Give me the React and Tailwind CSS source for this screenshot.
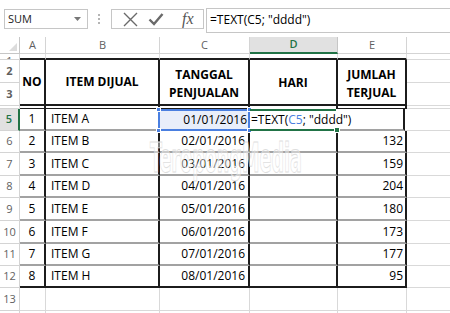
import React from 'react';

// rows 6..12 of the sheet
const rows = [
  { n: 6, no: 2, name: 'ITEM B', date: '02/01/2016', qty: '132', h: 'h-[22px]' },
  { n: 7, no: 3, name: 'ITEM C', date: '03/01/2016', qty: '159', h: 'h-[23px]' },
  { n: 8, no: 4, name: 'ITEM D', date: '04/01/2016', qty: '204', h: 'h-[22px]' },
  { n: 9, no: 5, name: 'ITEM E', date: '05/01/2016', qty: '180', h: 'h-[23px]' },
  { n: 10, no: 6, name: 'ITEM F', date: '06/01/2016', qty: '173', h: 'h-[23px]' },
  { n: 11, no: 7, name: 'ITEM G', date: '07/01/2016', qty: '177', h: 'h-[22px]' },
  { n: 12, no: 8, name: 'ITEM H', date: '08/01/2016', qty: '95', h: 'h-[22px]' },
];

const rowHead = 'w-[20px] shrink-0 flex items-center justify-center border-r border-b border-[#d4d4d4] text-[11px] text-[#5f5f5f]';
const sep = 'border-b-2 border-b-[#a2a2a2]';
const solid = 'border-b-2 border-b-[#1c1c1c]';

const FormulaBar = () => (
  <div className="h-[37px] flex items-start pt-[8px] pl-[4px]">
    <div className="w-[84px] h-[20px] mt-[1px] border border-[#c6c6c6] flex items-center justify-between pl-[3px] pr-[6px] text-[11px] text-[#222]">
      <span>SUM</span>
      <svg width="7" height="4" viewBox="0 0 7 4"><path d="M0 0h7L3.5 4z" fill="#777" /></svg>
    </div>
    <div className="ml-[10px] mt-[6px] flex flex-col gap-[2px]">
      <div className="w-[2px] h-[2px] bg-[#b5b5b5]" />
      <div className="w-[2px] h-[2px] bg-[#b5b5b5]" />
      <div className="w-[2px] h-[2px] bg-[#b5b5b5]" />
    </div>
    <div className="ml-[11px] w-[93px] h-[20px] mt-[1px] border border-[#c6c6c6] flex items-center pl-[11px] gap-[10px]">
      <svg width="15" height="15" viewBox="0 0 15 15">
        <path d="M1 1L14 14M14 1L1 14" stroke="#6a6a6a" strokeWidth="1.4" fill="none" />
      </svg>
      <svg width="16" height="14" viewBox="0 0 16 14">
        <path d="M1.5 7.5L6 12L14.5 2" stroke="#6a6a6a" strokeWidth="2.4" fill="none" />
      </svg>
      <span className="ml-[8px] font-['Liberation_Serif',serif] italic text-[16px] leading-none text-[#555]">fx</span>
    </div>
    <div className="ml-[2px] flex-1 h-[25px] border border-r-0 border-[#c6c6c6] pl-[3px] pt-[2px] text-[12px] text-black whitespace-nowrap">
      =TEXT(C5; "dddd")
    </div>
  </div>
);

const ColumnHeaders = () => (
  <div className="flex h-[17px] text-[11px] text-[#5f5f5f]">
    <div className="w-[20px] shrink-0 border-r border-b border-[#c6c6c6] flex items-end justify-end pr-[2px] pb-[2px]">
      <svg width="8" height="8" viewBox="0 0 8 8"><path d="M8 0V8H0z" fill="#dcdcdc" /></svg>
    </div>
    <div className="w-[26px] shrink-0 border-r border-b border-[#d4d4d4] flex items-center justify-center">A</div>
    <div className="w-[114px] shrink-0 border-r border-b border-[#d4d4d4] flex items-center justify-center">B</div>
    <div className="w-[90px] shrink-0 border-r border-b border-[#d4d4d4] flex items-center justify-center">C</div>
    <div className="w-[88px] shrink-0 bg-[#e1e1e1] border-r border-r-[#c6c6c6] border-b-2 border-b-[#217346] flex items-center justify-center text-[#217346] font-semibold">D</div>
    <div className="w-[69px] shrink-0 border-r border-b border-[#d4d4d4] flex items-center justify-center">E</div>
    <div className="flex-1 border-b border-[#d4d4d4]" />
  </div>
);

const DataRow = ({ r, last }) => {
  const b = last ? solid : sep;
  return (
    <div className={`flex ${r.h} text-[12px] text-black`}>
      <div className={rowHead}>{r.n}</div>
      <div className={`w-[26px] shrink-0 flex items-center justify-center border-r-2 border-r-[#1c1c1c] ${b}`}>{r.no}</div>
      <div className={`w-[114px] shrink-0 flex items-center pl-[5px] border-r-2 border-r-[#1c1c1c] ${b}`}>{r.name}</div>
      <div className={`w-[90px] shrink-0 flex items-center justify-end pr-[3px] border-r-2 border-r-[#1c1c1c] ${b}`}>{r.date}</div>
      <div className={`w-[88px] shrink-0 border-r-2 border-r-[#1c1c1c] ${b}`} />
      <div className={`w-[69px] shrink-0 flex items-center justify-end pr-[2px] border-r-2 border-r-[#1c1c1c] ${b}`}>{r.qty}</div>
      <div className="flex-1 border-b border-[#d9d9d9]" />
    </div>
  );
};

const EmptyRow = ({ n, h }) => (
  <div className={`flex ${h}`}>
    <div className={rowHead}>{n}</div>
    <div className="w-[26px] shrink-0 border-r border-b border-[#d9d9d9]" />
    <div className="w-[114px] shrink-0 border-r border-b border-[#d9d9d9]" />
    <div className="w-[90px] shrink-0 border-r border-b border-[#d9d9d9]" />
    <div className="w-[88px] shrink-0 border-r border-b border-[#d9d9d9]" />
    <div className="w-[69px] shrink-0 border-r border-b border-[#d9d9d9]" />
    <div className="flex-1 border-b border-[#d9d9d9]" />
  </div>
);

export default function App() {
  return (
    <div className="relative w-[450px] h-[313px] overflow-hidden bg-white font-['Open_Sans',sans-serif]">
      <FormulaBar />
      <ColumnHeaders />

      {/* row 1, mostly hidden */}
      <div className="flex h-[6px]">
        <div className="w-[20px] shrink-0 overflow-hidden border-r border-b border-[#d4d4d4] text-[11px] leading-[14px] text-[#5f5f5f] text-center">1</div>
        <div className={`w-[26px] shrink-0 border-r border-r-[#e0e0e0] ${solid}`} />
        <div className={`w-[114px] shrink-0 border-r border-r-[#e0e0e0] ${solid}`} />
        <div className={`w-[90px] shrink-0 border-r border-r-[#e0e0e0] ${solid}`} />
        <div className={`w-[88px] shrink-0 border-r border-r-[#e0e0e0] ${solid}`} />
        <div className={`w-[69px] shrink-0 border-r border-r-[#e0e0e0] ${solid}`} />
        <div className="flex-1 border-b border-[#d9d9d9]" />
      </div>

      {/* rows 2-3: merged table header */}
      <div className="flex h-[46px] text-[12px] font-bold text-black">
        <div className="w-[20px] shrink-0 flex flex-col">
          <div className={`h-[23px] ${rowHead}`}>2</div>
          <div className={`flex-1 ${rowHead}`}>3</div>
        </div>
        <div className={`w-[26px] shrink-0 flex items-center justify-center border-r-2 border-r-[#1c1c1c] ${solid}`}>NO</div>
        <div className={`w-[114px] shrink-0 flex items-center justify-center border-r-2 border-r-[#1c1c1c] ${solid}`}>ITEM DIJUAL</div>
        <div className={`w-[90px] shrink-0 flex flex-col items-center justify-center pt-[4px] leading-[18px] border-r-2 border-r-[#1c1c1c] ${solid}`}>
          <span>TANGGAL</span>
          <span>PENJUALAN</span>
        </div>
        <div className={`w-[88px] shrink-0 flex items-center justify-center pt-[2px] border-r-2 border-r-[#1c1c1c] ${solid}`}>HARI</div>
        <div className={`w-[69px] shrink-0 flex flex-col items-center justify-center pt-[4px] leading-[18px] border-r-2 border-r-[#1c1c1c] ${solid}`}>
          <span>JUMLAH</span>
          <span>TERJUAL</span>
        </div>
        <div className="flex-1 flex flex-col">
          <div className="h-[23px] border-b border-[#d9d9d9]" />
          <div className="flex-1 border-b border-[#d9d9d9]" />
        </div>
      </div>

      {/* row 4 hidden: leaves a double line */}
      <div className="flex h-[3px]">
        <div className="w-[20px] shrink-0 border-r border-b border-[#d4d4d4]" />
        <div className="w-[26px] shrink-0 border-r-2 border-r-[#1c1c1c] border-b border-b-[#1c1c1c]" />
        <div className="w-[114px] shrink-0 border-r-2 border-r-[#1c1c1c] border-b border-b-[#1c1c1c]" />
        <div className="w-[90px] shrink-0 border-r-2 border-r-[#1c1c1c] border-b border-b-[#1c1c1c]" />
        <div className="w-[88px] shrink-0 border-r-2 border-r-[#1c1c1c]" />
        <div className="w-[69px] shrink-0 border-r-2 border-r-[#1c1c1c] border-b border-b-[#1c1c1c]" />
        <div className="flex-1 border-b border-[#d9d9d9]" />
      </div>

      {/* row 5: active cell D5 in edit mode, C5 referenced */}
      <div className="flex h-[22px] text-[12px] text-black">
        <div className="w-[20px] shrink-0 flex items-center justify-center bg-[#e1e1e1] border-r-2 border-r-[#217346] border-b border-b-[#d4d4d4] text-[11px] font-semibold text-[#217346]">5</div>
        <div className={`w-[26px] shrink-0 flex items-center justify-center border-r-2 border-r-[#1c1c1c] ${sep}`}>1</div>
        <div className={`w-[112px] shrink-0 flex items-center pl-[5px] ${sep}`}>ITEM A</div>
        <div className="relative w-[92px] shrink-0 flex items-center justify-end pr-[1px] bg-[#e8eefa] border-2 border-[#4a7fe0]">
          01/01/2016
          <div className="absolute -left-[4px] -top-[4px] w-[5px] h-[5px] bg-[#4a7fe0] border border-white" />
          <div className="absolute -right-[4px] -top-[4px] w-[5px] h-[5px] bg-[#4a7fe0] border border-white" />
          <div className="absolute -left-[4px] -bottom-[4px] w-[5px] h-[5px] bg-[#4a7fe0] border border-white" />
          <div className="absolute -right-[4px] -bottom-[4px] w-[5px] h-[5px] bg-[#4a7fe0] border border-white" />
        </div>
        <div className="relative z-10 w-[86px] shrink-0 flex items-center pl-[1px] whitespace-nowrap border-t-2 border-b-2 border-[#217346]">
          <span>=TEXT(<span className="text-[#4a7fe0]">C5</span>; "dddd")</span>
          <span className="ml-[1px] w-px h-[14px] bg-black" />
          <div className="absolute -right-[4px] -bottom-[4px] w-[6px] h-[6px] bg-[#217346] border border-white" />
        </div>
        <div className={`w-[69px] shrink-0 border-r-2 border-r-[#1c1c1c] ${sep}`} />
        <div className="flex-1 border-b border-[#d9d9d9]" />
      </div>

      {rows.map((r, i) => (
        <DataRow key={r.n} r={r} last={i === rows.length - 1} />
      ))}
      <EmptyRow n={13} h="h-[23px]" />
      <EmptyRow n="" h="h-[23px]" />

      {/* watermark */}
      <svg className="absolute left-[146px] top-[126px] pointer-events-none" width="172" height="56" viewBox="0 0 172 56">
        <text x="4" y="46" fontFamily="DejaVu Sans Condensed, sans-serif" fontSize="40" fontWeight="bold" textLength="152" lengthAdjust="spacingAndGlyphs" fill="rgba(255,255,255,0.45)" stroke="#dedede" strokeWidth="0.9">TeropongMedia</text>
      </svg>
    </div>
  );
}
